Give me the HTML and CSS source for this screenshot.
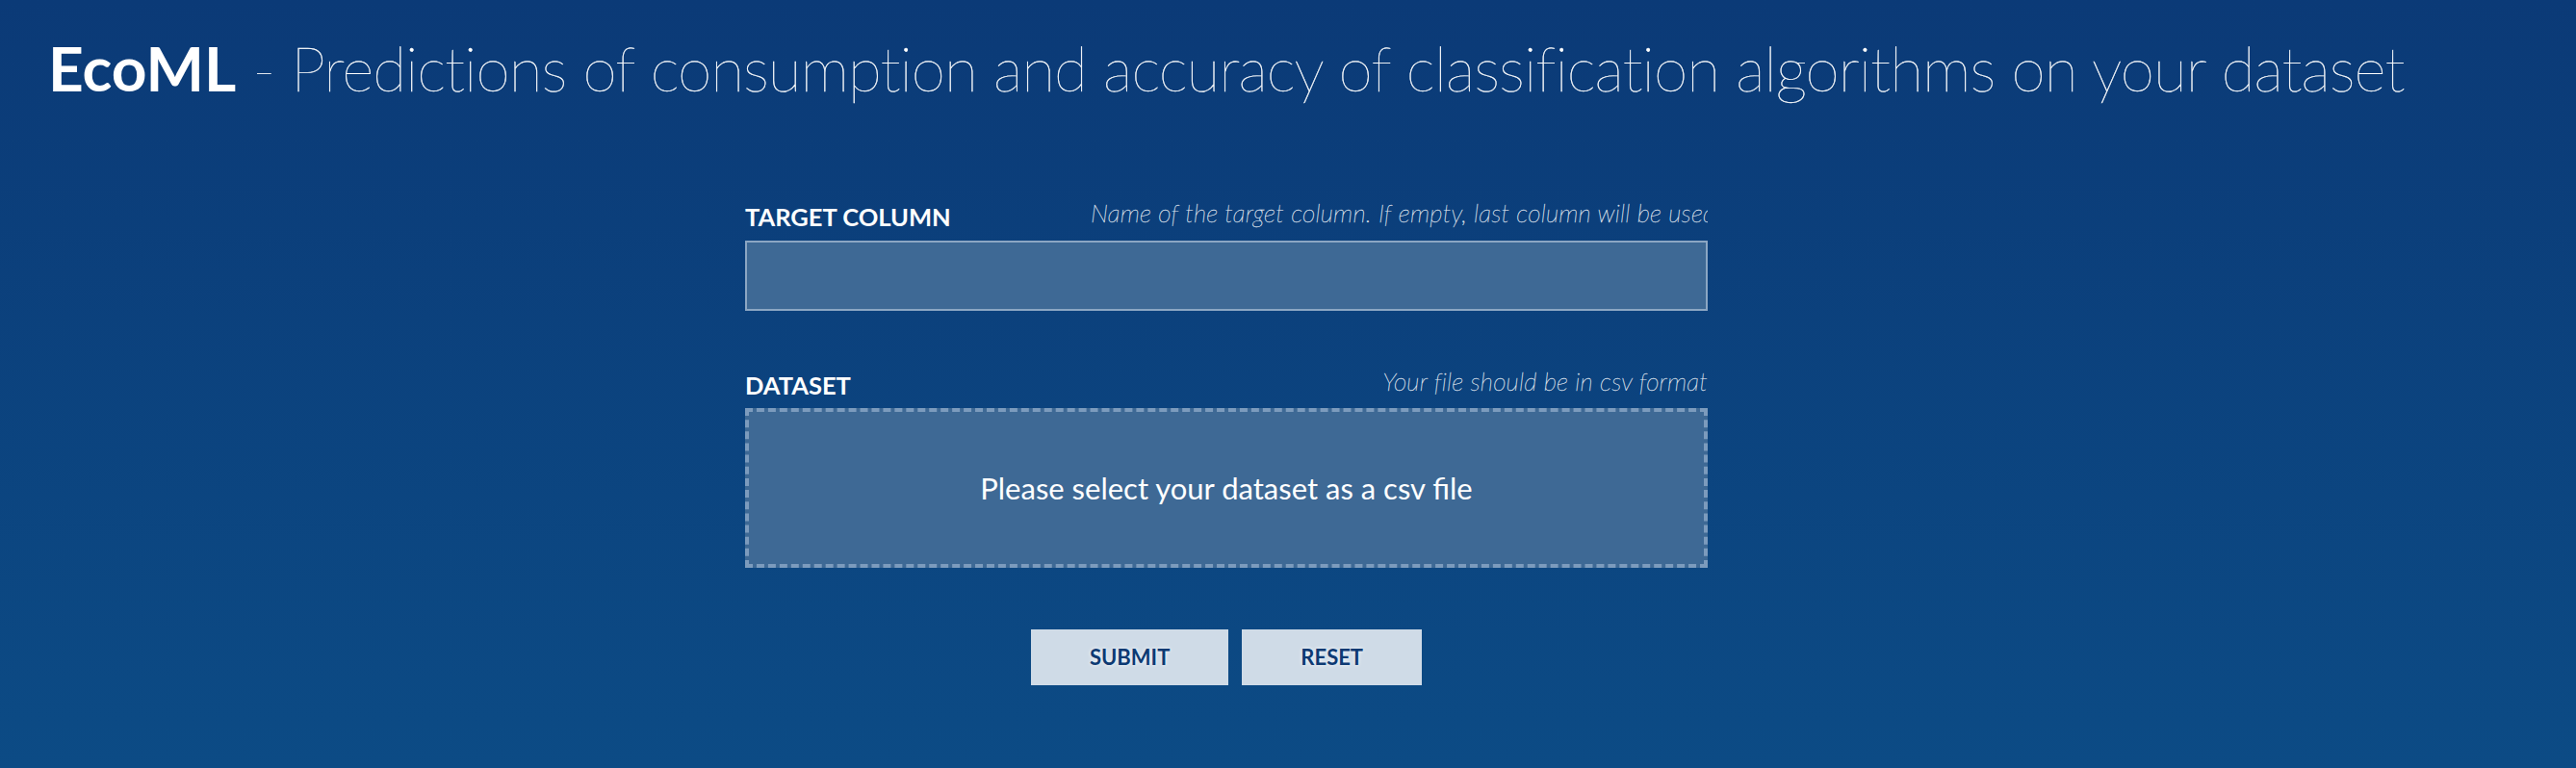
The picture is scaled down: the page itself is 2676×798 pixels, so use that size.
FILE: index.html
```html
<!DOCTYPE html>
<html lang="en">
<head>
<meta charset="utf-8">
<title>EcoML</title>
<link rel="stylesheet" href="styles.css">
</head>
<body>
<h1 class="title"><span class="brand">EcoML</span><span class="tagline"> - Predictions of consumption and accuracy of classification algorithms on your dataset</span></h1>
<form class="form">
  <div class="field-head">
    <label class="field-label" for="target">TARGET COLUMN</label>
    <span class="field-hint field-hint-clip">Name of the target column. If empty, last column will be used</span>
  </div>
  <input class="text-input" id="target" type="text">
  <div class="field-head field-head-second">
    <span class="field-label">DATASET</span>
    <span class="field-hint">Your file should be in csv format</span>
  </div>
  <div class="dropzone">Please select your dataset as a csv file</div>
  <div class="actions">
    <button class="btn" type="button">SUBMIT</button>
    <button class="btn" type="button">RESET</button>
  </div>
</form>
</body>
</html>
```

FILE: styles.css
```css
html, body {
  margin: 0;
  padding: 0;
}
body {
  width: 2676px;
  height: 798px;
  overflow: hidden;
  background: linear-gradient(180deg, #0b3a77 0%, #0c4b85 100%);
  font-family: Lato, "Open Sans", sans-serif;
  color: #ffffff;
}
.title {
  margin: 33px 0 0 50px;
  font-size: 64px;
  line-height: 1.2;
  font-weight: 400;
  white-space: nowrap;
}
.brand {
  font-weight: 700;
}
.tagline {
  font-weight: 100;
  letter-spacing: -1px;
  -webkit-text-stroke: 0.35px #ffffff;
}
.form {
  width: 1000px;
  margin: 100px 0 0 774px;
}
.field-head {
  display: flex;
  justify-content: space-between;
  align-items: flex-end;
  height: 30px;
  margin-bottom: 10px;
}
.field-head-second {
  margin-top: 62px;
  margin-bottom: 9px;
}
.field-label {
  font-size: 25.5px;
  line-height: 30px;
  font-weight: 700;
  white-space: nowrap;
}
.field-hint {
  font-size: 26px;
  line-height: 31px;
  font-weight: 100;
  font-style: italic;
  letter-spacing: 0.2px;
  color: #e3eaf2;
  -webkit-text-stroke: 0.3px #e3eaf2;
  margin-bottom: 3px;
  white-space: nowrap;
  overflow: hidden;
  text-align: right;
}
.field-hint-clip {
  flex: 0 0 auto;
  width: 641px;
  text-align: left;
}
.text-input {
  display: block;
  box-sizing: border-box;
  width: 1000px;
  height: 73px;
  margin: 0;
  background: #3e6995;
  border: 2px solid #8ba6c3;
  border-radius: 0;
  outline: none;
  padding: 0 16px;
  font-family: inherit;
  font-size: 28px;
  color: #ffffff;
}
.dropzone {
  box-sizing: border-box;
  height: 166px;
  display: flex;
  align-items: center;
  justify-content: center;
  background: #3e6995;
  border: 4px dashed #7c9bbd;
  font-size: 31px;
  font-weight: 400;
  color: #ffffff;
}
.actions {
  display: flex;
  justify-content: center;
  gap: 14px;
  margin-top: 64px;
}
.btn {
  height: 58px;
  padding: 0 61px;
  border: none;
  border-radius: 0;
  background: #cfdbe7;
  color: #0d3a73;
  font-family: inherit;
  font-size: 22px;
  font-weight: 700;
  text-shadow: 0 0 4px rgba(255, 255, 255, 0.9);
  cursor: pointer;
}
```
